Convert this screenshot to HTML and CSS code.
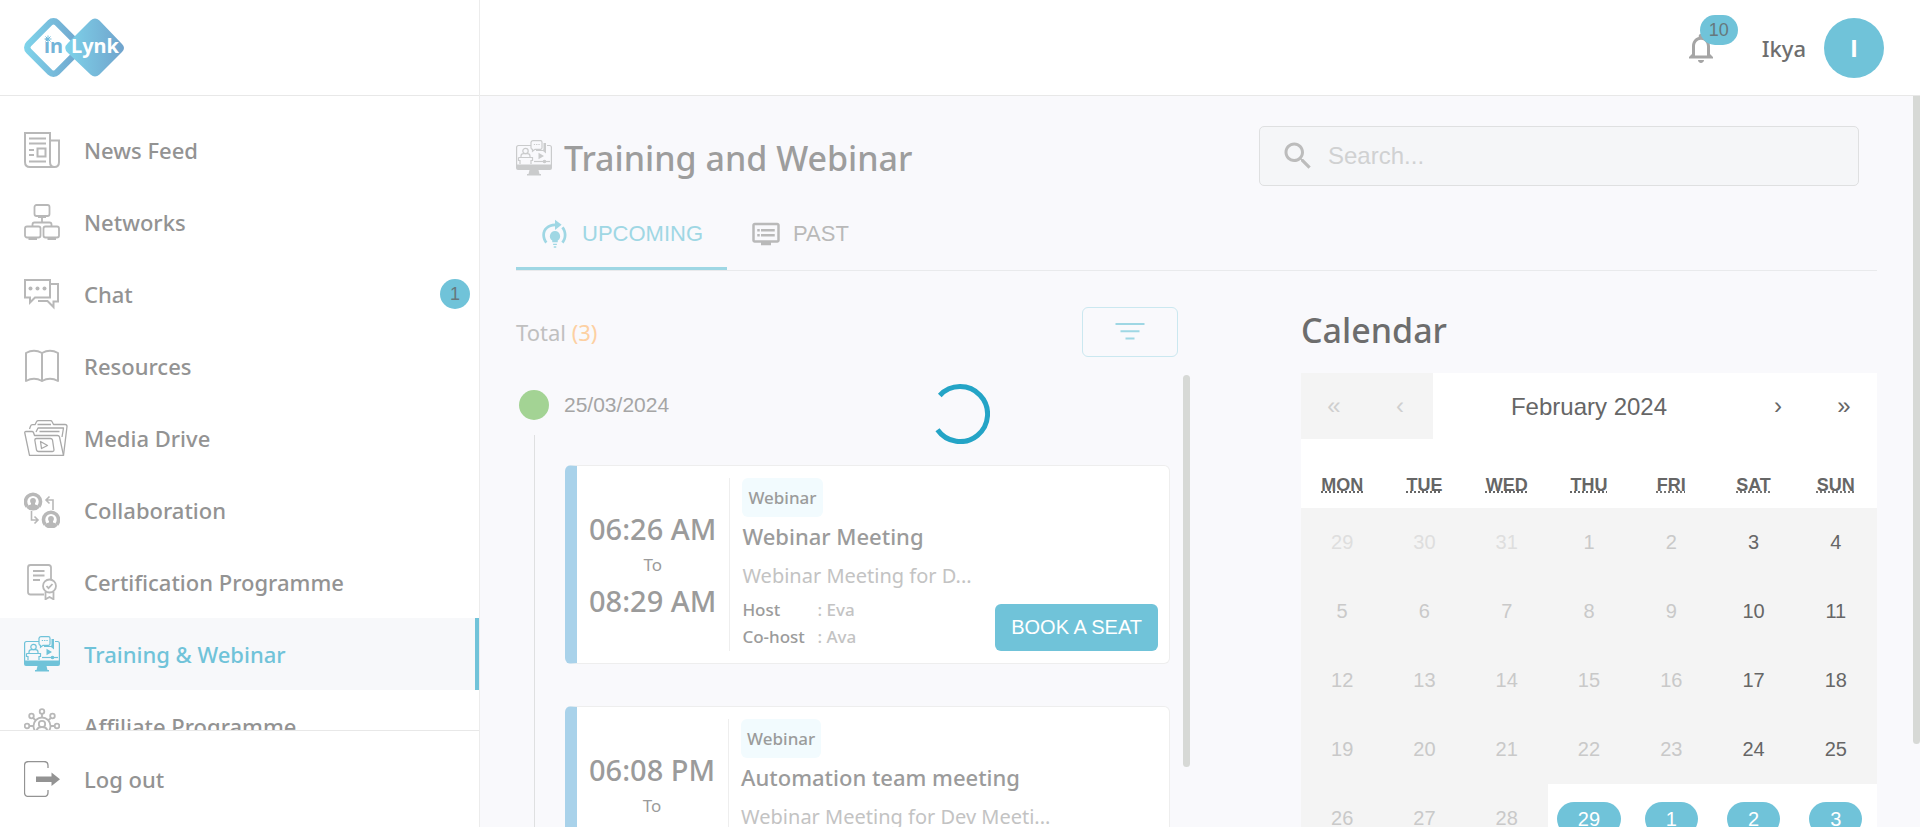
FILE: index.html
```html
<!DOCTYPE html>
<html lang="en">
<head>
<meta charset="utf-8">
<title>Training and Webinar</title>
<link rel="stylesheet" href="styles.css">
</head>
<body>
<svg class="defs" width="0" height="0" aria-hidden="true">
  <symbol id="webinar" viewBox="0 0 36 36">
    <g fill="none" stroke="currentColor" stroke-width="1.200">
      <path d="M15 5.500H2.500Q.6 5.500.6 7.500V25M31 5.500h2.500Q35.400 5.500 35.400 7.500V25"/>
      <path d="M17 .7h7.500q1.500 0 1.500 1.500v5.600q0 1.500-1.500 1.500h-5.500l-2.500 2V9.300q-1.500 0-1.500-1.500V2.200Q15.500.7 17 .7z"/>
      <circle cx="9.500" cy="11" r="2.700"/>
      <path d="M5 17.500v-1.500q0-2.300 2.500-2.300h4q2.500 0 2.500 2.300v1.500M2.500 17.500h14v3H15V24M2.500 17.500v3H4V24"/>
      <path d="M18 21.500h16"/><circle cx="28.500" cy="21.500" r="1.200" fill="currentColor"/>
    </g>
    <path fill="currentColor" d="M27.500 3h2.500v10.500L27 11h-7v-1h6.500q1 0 1-1zM22.500 12.800l5.500 3.200-5.500 3.200zM0 24.500h36V28q0 2-2 2H22.500l1 4H25v1.500H11V34h1.500l1-4H2q-2 0-2-2z"/>
    <path stroke="currentColor" stroke-width="1.200" stroke-dasharray="1.300 1" d="M17.800 4.500h6.500"/>
  </symbol>
</svg>

<div class="app">
  <aside class="sidebar">
    <div class="brand">
      <svg class="logo" viewBox="0 0 102 60" role="img" aria-label="inLynk">
        <defs>
          <linearGradient id="ga" x1="0" x2="1"><stop offset="0" stop-color="#7ed3ea"/><stop offset="1" stop-color="#70a3cc"/></linearGradient>
          <linearGradient id="gb" x1="0" y1="1" x2="1" y2="0"><stop offset="0" stop-color="#7ed3ea"/><stop offset="1" stop-color="#70a3cc"/></linearGradient>
        </defs>
        <rect x="9.500" y="9.500" width="40" height="40" rx="5" transform="rotate(45 29.500 29.500)" fill="none" stroke="url(#gb)" stroke-width="6.500"/>
        <path d="M66.500 2.500 L44 25 Q38.500 30 44 35 L66.500 56.500 Q71 60.500 75.500 56.500 L98 34 Q102 30 98 26 L75.500 2.500 Q71 -1.500 66.500 2.500Z" fill="url(#ga)"/>
        <text x="20" y="35" class="logo-in">in</text>
        <text x="47" y="35" class="logo-lynk">Lynk</text>
        <g stroke="#70bcdd" stroke-width="1"><path d="M20.500 21h7M24 17.500v7M21.500 18.500l5 5M26.500 18.500l-5 5"/></g>
      </svg>
    </div>
    <nav class="nav">
      <a class="nav-item" href="#"><svg viewBox="0 0 36 36"><g fill="none" stroke="currentColor" stroke-width="2"><path d="M1 1h25v29q0 5 4.500 5H6q-5 0-5-5zM26 8.500h9V30q0 5-4.500 5T26 30"/><path d="M5 6.500h17M5 11.500h17M5 18h5M5 23h5M5 29.500h17"/><path d="M13.500 16.500h8v8h-8z"/></g></svg><span>News Feed</span></a>
      <a class="nav-item" href="#"><svg viewBox="0 0 36 36"><g fill="none" stroke="currentColor" stroke-width="1.800"><rect x="10.500" y="1" width="15" height="11" rx="2"/><rect x="1" y="22.500" width="15.500" height="11" rx="2"/><rect x="19.500" y="22.500" width="15.500" height="11" rx="2"/><path d="M14 13.200h8M18 13v5.500M8.500 22v-1.500q0-2 2-2h15q2 0 2 2V22M4.500 35h8.500M23.500 35h8.500"/></g></svg><span>Networks</span></a>
      <a class="nav-item" href="#"><svg viewBox="0 0 36 36"><g fill="none" stroke="currentColor" stroke-width="2"><path d="M1 4h25v17.500H11l-5 5v-5H1z"/><path d="M26 8h8v17.500h-4.500V31l-6-6H14"/></g><g fill="currentColor"><circle cx="6.500" cy="12.500" r="2"/><circle cx="13.500" cy="12.500" r="2"/><circle cx="20.500" cy="12.500" r="2"/></g></svg><span>Chat</span><span class="count">1</span></a>
      <a class="nav-item" href="#"><svg viewBox="0 0 36 36"><path fill="none" stroke="currentColor" stroke-width="2" stroke-linejoin="round" d="M18 5Q10 .5 2 5v28q8-4.500 16 0zM18 5q8-4.500 16 0v28q-8-4.500-16 0z"/></svg><span>Resources</span></a>
      <a class="nav-item" href="#"><svg class="wide" viewBox="0 0 44 36"><g fill="none" stroke="currentColor" stroke-width="1.300" stroke-linejoin="round"><path d="M5.500 35.300 .8 13q-.3-1.500 1.200-1.500h6q1 0 1.500 1l1 3h23q1.500 0 2 1.500l4 18.300z"/><path d="M39.500 35.300 43 6.500q0-2-2-2H29.500L28 1.500Q27.700.7 26.500.7H14.500q-1.500 0-2 1l-1.500 3H8.500q-1.500 0-2 1.500L5.500 9"/><path d="M12 12l2-4h25.500l-1.500 9M15.500 11.500h20M13.500 4.500H27"/><path d="M12.500 18.500h14q1.500 0 2 1.500l1.500 10q0 1.500-1.500 1.500H14.500q-1.500 0-2-1.500L10.800 20q0-1.500 1.700-1.500zM16.500 21.500l1 7 6-3z"/></g></svg><span>Media Drive</span></a>
      <a class="nav-item" href="#"><svg viewBox="0 0 36 36"><g id="person"><path d="M3.200 14.500A7.500 7.500 0 1 1 14.800 14.500" fill="none" stroke="currentColor" stroke-width="3.600"/><circle cx="9" cy="8.800" r="2.900" fill="currentColor"/><path fill="currentColor" d="M7 10h4v2.500q4 .8 4.500 3-2 3-6.500 3t-6.500-3q.5-2.200 4.500-3z"/></g><use href="#person" x="18" y="18"/><g fill="none" stroke="currentColor" stroke-width="1.600"><path d="M29 18V8h-7M25.500 4.500 22 8l3.500 3.500M7.500 19v9H14M10.500 24.500 14 28l-3.500 3.500"/></g></svg><span>Collaboration</span></a>
      <a class="nav-item" href="#"><svg viewBox="0 0 36 36"><g fill="none" stroke="currentColor" stroke-width="1.800"><path d="M27 15V3.500Q27 1 24.500 1H6.500Q4 1 4 3.500V28q0 2.500 2.500 2.500H20"/><path d="M9 7h11.500M9 11.500h11.500M9 16h7"/><circle cx="25.500" cy="22" r="6.500"/><path d="M22.500 22l2 2.200 4-4.200M21.500 28v7.300l4-2.300 4 2.300V28"/></g></svg><span>Certification Programme</span></a>
      <a class="nav-item active" href="#" aria-current="page"><svg viewBox="0 0 36 36"><use href="#webinar"/></svg><span>Training &amp; Webinar</span></a>
      <a class="nav-item" href="#"><svg viewBox="0 0 36 36"><g fill="none" stroke="currentColor" stroke-width="1.800"><circle cx="18" cy="18" r="8.500"/><circle cx="18" cy="16" r="3.200"/><path d="M12.500 24q0-5 5.500-5t5.500 5"/><circle cx="18" cy="3.500" r="2.300"/><circle cx="7.500" cy="8" r="2.300"/><circle cx="28.500" cy="8" r="2.300"/><circle cx="3" cy="18" r="2.300"/><circle cx="33" cy="18" r="2.300"/><path d="M18 6v4M9 10l3 2.500M27 10l-3 2.500M5 18h4.500M26.500 18H31"/></g></svg><span>Affiliate Programme</span></a>
    </nav>
    <div class="logout">
      <a class="nav-item dark" href="#"><svg viewBox="0 0 36 36"><path fill="none" stroke="currentColor" stroke-width="1.300" d="M24 7V4.500q0-4-4-4H4.500q-4 0-4 4v27q0 4 4 4H20q4 0 4-4V29"/><path fill="currentColor" d="M12 15.500h15.500V11.500l8.500 6.800-8.500 6.700v-4H12z"/></svg><span>Log out</span></a>
    </div>
  </aside>

  <div class="content">
    <header class="topbar">
      <button class="bell" type="button" aria-label="Notifications">
        <svg viewBox="0 0 24 24"><path fill="currentColor" d="M12 22c1.100 0 2-.9 2-2h-4c0 1.100.9 2 2 2zm6-6v-5c0-3.070-1.630-5.640-4.500-6.320V4c0-.83-.67-1.500-1.500-1.500s-1.500.67-1.500 1.500v.68C7.640 5.360 6 7.920 6 11v5l-2 2v1h16v-1l-2-2zm-2 1H8v-6c0-2.480 1.510-4.500 4-4.500s4 2.020 4 4.500v6z"/></svg>
        <span class="bell-count">10</span>
      </button>
      <span class="user">Ikya</span>
      <span class="avatar">I</span>
    </header>

    <main class="page">
      <div class="page-head">
        <h1><svg viewBox="0 0 36 36"><use href="#webinar"/></svg>Training and Webinar</h1>
        <label class="search">
          <svg viewBox="0 0 24 24"><path fill="currentColor" d="M15.500 14h-.79l-.28-.27C15.410 12.590 16 11.110 16 9.500 16 5.910 13.090 3 9.500 3S3 5.910 3 9.500 5.910 16 9.500 16c1.610 0 3.090-.59 4.230-1.570l.27.28v.79l5 4.990L20.490 19l-4.990-5zm-6 0C7.010 14 5 11.990 5 9.500S7.010 5 9.500 5 14 7.010 14 9.500 11.990 14 9.500 14z"/></svg>
          <input type="search" placeholder="Search..." aria-label="Search">
        </label>
      </div>

      <div class="tabs" role="tablist">
        <button class="tab selected" type="button" role="tab" aria-selected="true"><svg viewBox="0 0 24 24"><path fill="currentColor" d="M12 .5v3C6 3.700 1.800 7.400 1.800 12.800c0 2.600.9 4.900 2.400 6.700l1.700-1.400c-1.200-1.500-1.900-3.300-1.900-5.300 0-4.300 3.200-7 8-7.100v3L17.300 4.500zM18.800 6l-1.700 1.400c1.200 1.500 1.900 3.300 1.900 5.400s-.7 3.900-1.900 5.400l1.700 1.300c1.500-1.800 2.400-4.200 2.400-6.700s-.9-5-2.400-6.800zM12 9.500a4.200 4.200 0 0 0-2.200 7.700V18.500h4.400v-1.300A4.200 4.200 0 0 0 12 9.500zM10.500 19.700h3v1h-3zM11 21.700h2v1.300h-2z"/></svg>UPCOMING</button>
        <button class="tab" type="button" role="tab" aria-selected="false"><svg viewBox="0 0 24 24"><path fill="currentColor" d="M21 3H3c-1.100 0-2 .9-2 2v12c0 1.100.9 2 2 2h5v2h8v-2h5c1.100 0 1.990-.9 1.990-2L23 5c0-1.100-.9-2-2-2zm0 14H3V5h18v12zm-2-9H8v2h11V8zm0 4H8v2h11v-2zM7 8H5v2h2V8zm0 4H5v2h2v-2z"/></svg>PAST</button>
      </div>

      <div class="columns">
        <section class="sessions">
          <div class="total-row">
            <p class="total">Total <span>(3)</span></p>
            <button class="filter" type="button" aria-label="Filter"><svg viewBox="0 0 30 20"><path stroke="currentColor" stroke-width="2" d="M.5 3h29M5.500 10.300h19M10.500 17.600h9"/></svg></button>
          </div>
          <div class="timeline">
            <div class="day"><span class="dot"></span><time>25/03/2024</time></div>
            <div class="day-items">
              <article class="card">
                <div class="times"><strong>06:26 AM</strong><span>To</span><strong>08:29 AM</strong></div>
                <div class="details">
                  <span class="tag">Webinar</span>
                  <h2>Webinar Meeting</h2>
                  <p class="desc">Webinar Meeting for D...</p>
                  <dl><dt>Host</dt><dd>: Eva</dd><dt>Co-host</dt><dd>: Ava</dd></dl>
                </div>
                <button class="book" type="button">BOOK A SEAT</button>
              </article>
              <article class="card">
                <div class="times"><strong>06:08 PM</strong><span>To</span><strong>07:08 PM</strong></div>
                <div class="details">
                  <span class="tag">Webinar</span>
                  <h2>Automation team meeting</h2>
                  <p class="desc">Webinar Meeting for Dev Meeti...</p>
                </div>
              </article>
            </div>
            <span class="list-thumb"></span>
          </div>
        </section>

        <section class="calendar">
          <h2 class="calendar-title">Calendar</h2>
          <div class="cal-box">
            <div class="cal-nav">
              <button type="button" disabled>«</button><button type="button" disabled>‹</button>
              <span class="month">February 2024</span>
              <button type="button">›</button><button type="button">»</button>
            </div>
            <table>
              <thead><tr><th><abbr title="Monday">MON</abbr></th><th><abbr title="Tuesday">TUE</abbr></th><th><abbr title="Wednesday">WED</abbr></th><th><abbr title="Thursday">THU</abbr></th><th><abbr title="Friday">FRI</abbr></th><th><abbr title="Saturday">SAT</abbr></th><th><abbr title="Sunday">SUN</abbr></th></tr></thead>
              <tbody>
                <tr><td class="other">29</td><td class="other">30</td><td class="other">31</td><td>1</td><td>2</td><td class="weekend">3</td><td class="weekend">4</td></tr>
                <tr><td>5</td><td>6</td><td>7</td><td>8</td><td>9</td><td class="weekend">10</td><td class="weekend">11</td></tr>
                <tr><td>12</td><td>13</td><td>14</td><td>15</td><td>16</td><td class="weekend">17</td><td class="weekend">18</td></tr>
                <tr><td>19</td><td>20</td><td>21</td><td>22</td><td>23</td><td class="weekend">24</td><td class="weekend">25</td></tr>
                <tr><td>26</td><td>27</td><td>28</td><td class="open"><span>29</span></td><td class="open"><span>1</span></td><td class="open"><span>2</span></td><td class="open"><span>3</span></td></tr>
              </tbody>
            </table>
          </div>
        </section>
      </div>
      <span class="page-thumb"></span>
    </main>
  </div>
</div>
<svg class="spinner" viewBox="0 0 60 60" role="progressbar" aria-label="Loading"><path fill="none" stroke="#24a4c6" stroke-width="5" d="M9.800 11.500A27.500 27.500 0 1 1 7.500 45.800"/></svg>
</body>
</html>
```
FILE: styles.css
```css
* { box-sizing: border-box; }

body {
  margin: 0;
  background: #fff;
  color: #9b9b9b;
  font-family: "Noto Sans", "Open Sans", sans-serif;
}

h1, h2, p, dl, dd { margin: 0; }
button { font: inherit; color: inherit; border: 0; background: none; padding: 0; }
.defs { position: absolute; }

.app { display: flex; height: 100vh; overflow: hidden; }

/* Sidebar */
.sidebar {
  display: flex;
  flex-direction: column;
  flex: 0 0 480px;
  border-right: 1px solid #ececec;
}
.brand {
  flex: 0 0 96px;
  padding: 18px 24px 17px;
  border-bottom: 1px solid #e8e8e8;
}
.logo { display: block; width: 102px; height: 60px; }
.logo-in, .logo-lynk { font-size: 20px; font-weight: 700; }
.logo-in { fill: #75b4d8; }
.logo-lynk { fill: #fff; }

.nav { flex: 1; min-height: 0; overflow: hidden; padding-top: 18px; }
.nav-item {
  display: grid;
  grid-template-columns: 60px 1fr auto;
  align-items: center;
  height: 72px;
  padding: 0 9px 0 24px;
  color: #939393;
  font-size: 22px;
  font-weight: 500;
  text-decoration: none;
}
.nav-item svg { width: 36px; height: 36px; color: #b8b8b8; }
.nav-item svg.wide { width: 44px; color: #a9a9a9; }
.nav-item.dark svg { color: #939393; }
.nav-item.active { background: #f7f8fa; color: #70c3d9; border-right: 4px solid #70c3d9; }
.nav-item.active svg { color: #70c3d9; }
.count {
  width: 30px;
  border-radius: 15px;
  background: #70c3d9;
  color: #66787d;
  font: 18px/30px "Liberation Sans", sans-serif;
  text-align: center;
}
.logout { flex: 0 0 97px; padding: 12px 0; border-top: 1px solid #e8e8e8; }

/* Top bar */
.content { display: flex; flex-direction: column; flex: 1; min-width: 0; }
.topbar {
  display: flex;
  align-items: center;
  justify-content: flex-end;
  flex: 0 0 96px;
  padding-right: 36px;
  border-bottom: 1px solid #e8e8e8;
}
.bell { position: relative; width: 36px; height: 36px; margin-right: 43px; color: #a5a5a5; }
.bell svg { display: block; width: 36px; height: 36px; }
.bell-count {
  position: absolute;
  left: 17px;
  top: -15px;
  width: 38px;
  border-radius: 15px;
  background: #70c3d9;
  color: #66787d;
  font: 18px/30px "Liberation Sans", sans-serif;
}
.user { margin-right: 18px; color: #6e6e6e; font-size: 22px; font-weight: 500; }
.avatar {
  width: 60px;
  border-radius: 50%;
  background: #70c3d9;
  color: #fff;
  font: 700 24px/60px "Open Sans", sans-serif;
  text-align: center;
}

/* Page */
.page {
  position: relative;
  flex: 1;
  min-height: 0;
  overflow: hidden;
  padding: 30px 43px 0 36px;
  background: #f9f9fc;
}
.page-thumb, .list-thumb { position: absolute; right: 0; top: 0; width: 7px; background: #d7d9d6; }
.page-thumb { height: 648px; border-radius: 0 0 4px 4px; }
.list-thumb { height: 392px; border-radius: 4px; }

.page-head { display: flex; align-items: center; justify-content: space-between; padding-right: 18px; }
h1 {
  display: flex;
  align-items: center;
  gap: 12px;
  padding-top: 4px;
  color: #9d9d9d;
  font-size: 34px;
  font-weight: 500;
  line-height: 56px;
}
h1 svg { width: 36px; height: 36px; color: #cacbcc; }
.search {
  display: flex;
  align-items: center;
  flex: 0 1 600px;
  height: 60px;
  padding: 0 20px;
  gap: 12px;
  border: 1px solid #dfe0e1;
  border-radius: 5px;
  background: #f5f6f8;
  color: #bcbcbc;
}
.search svg { width: 36px; height: 36px; }
.search input {
  flex: 1;
  min-width: 0;
  padding: 0;
  border: 0;
  outline: 0;
  background: none;
  font: 24px "Liberation Sans", sans-serif;
}
.search input::placeholder { color: #d0d1d2; }

.tabs { display: flex; height: 85px; border-bottom: 1px solid #e9eaec; }
.tab {
  display: flex;
  align-items: center;
  gap: 12px;
  padding: 14px 24px 0;
  color: #b9b9b9;
  font: 22px "Liberation Sans", sans-serif;
  border-bottom: 3px solid transparent;
}
.tab svg { width: 30px; height: 30px; }
.tab.selected { color: #9fd7e4; border-color: #9fd7e4; }

.columns { display: flex; gap: 111px; }
.sessions { flex: 1; min-width: 0; }
.total-row { display: flex; align-items: center; justify-content: space-between; height: 104px; padding: 18px 12px 0 0; }
.total { color: #c0c0c0; font-size: 22px; }
.total span { color: #fdd0a2; }
.filter {
  display: grid;
  place-items: center;
  width: 96px;
  height: 50px;
  padding-bottom: 2px;
  border: 1px solid #cbe8f0;
  border-radius: 6px;
  color: #9fd7e4;
}
.filter svg { width: 30px; height: 20px; }

.timeline { position: relative; padding: 15px 20px 0 3px; }
.day { display: flex; align-items: center; gap: 15px; font: 21px/30px "Liberation Sans", sans-serif; color: #a5a5a5; }
.dot { width: 30px; height: 30px; border-radius: 50%; background: #a3d394; }
.day-items {
  display: flex;
  flex-direction: column;
  gap: 42px;
  margin: 15px 0 0 15px;
  padding: 30px 0 30px 30px;
  border-left: 1px solid #dfe0e1;
}
.card {
  display: flex;
  position: relative;
  min-height: 199px;
  padding: 12px;
  border: 1px solid #eee;
  border-left: 12px solid #a9d2ea;
  border-radius: 6px;
  background: #fff;
}
.times {
  display: flex;
  flex-direction: column;
  justify-content: center;
  align-items: center;
  gap: 6px;
  padding-right: 13px;
  border-right: 1px solid #eee;
}
.times strong { font-size: 29px; font-weight: 500; line-height: 36px; }
.times span { font-size: 17px; line-height: 24px; }
.details { padding-left: 12px; }
.tag {
  display: inline-block;
  padding: 0 6px;
  border-radius: 6px;
  background: #f2fbfe;
  font-size: 17px;
  font-weight: 500;
  line-height: 39px;
}
.details h2 { font-size: 22px; font-weight: 500; line-height: 39px; }
.desc { color: #c3c3c3; font-size: 20px; line-height: 39px; }
dl { display: grid; grid-template-columns: 75px auto; justify-content: start; padding-top: 1px; font-size: 17px; font-weight: 500; line-height: 27px; }
dd { color: #c3c3c3; }
.book {
  position: absolute;
  right: 11px;
  bottom: 12px;
  padding: 0 16px;
  border-radius: 6px;
  background: #70c3d9;
  color: #fff;
  font: 20px/47px "Liberation Sans", sans-serif;
}

/* Calendar */
.calendar { flex: 0 1 576px; color: #666; font-family: "Liberation Sans", sans-serif; }
.calendar-title { padding: 29px 0 13px; font: 500 34px/60px "Noto Sans", sans-serif; color: #6d6d6d; }
.cal-box { background: #fff; }
.cal-nav { display: flex; height: 66px; font-size: 24px; }
.cal-nav button { width: 66px; }
.cal-nav button:disabled { background: #f4f4f4; color: #cfcfcf; }
.month { flex: 1; line-height: 68px; text-align: center; }
table { width: 100%; table-layout: fixed; border-collapse: collapse; }
th { height: 69px; padding: 24px 0 0; font-size: 18px; }
td { height: 69px; padding: 0; background: #f4f4f4; color: #c9c9c9; font-size: 20px; text-align: center; }
td.other { color: #dedede; }
td.weekend { color: #666; }
td.open { background: #fff; color: #fff; }
td.open span { display: inline-block; padding: 0 21px; border-radius: 17px; background: #70c3d9; line-height: 34px; }

.spinner { position: fixed; left: 50%; top: 50%; width: 60px; height: 60px; margin: -30px 0 0 -30px; }
```
